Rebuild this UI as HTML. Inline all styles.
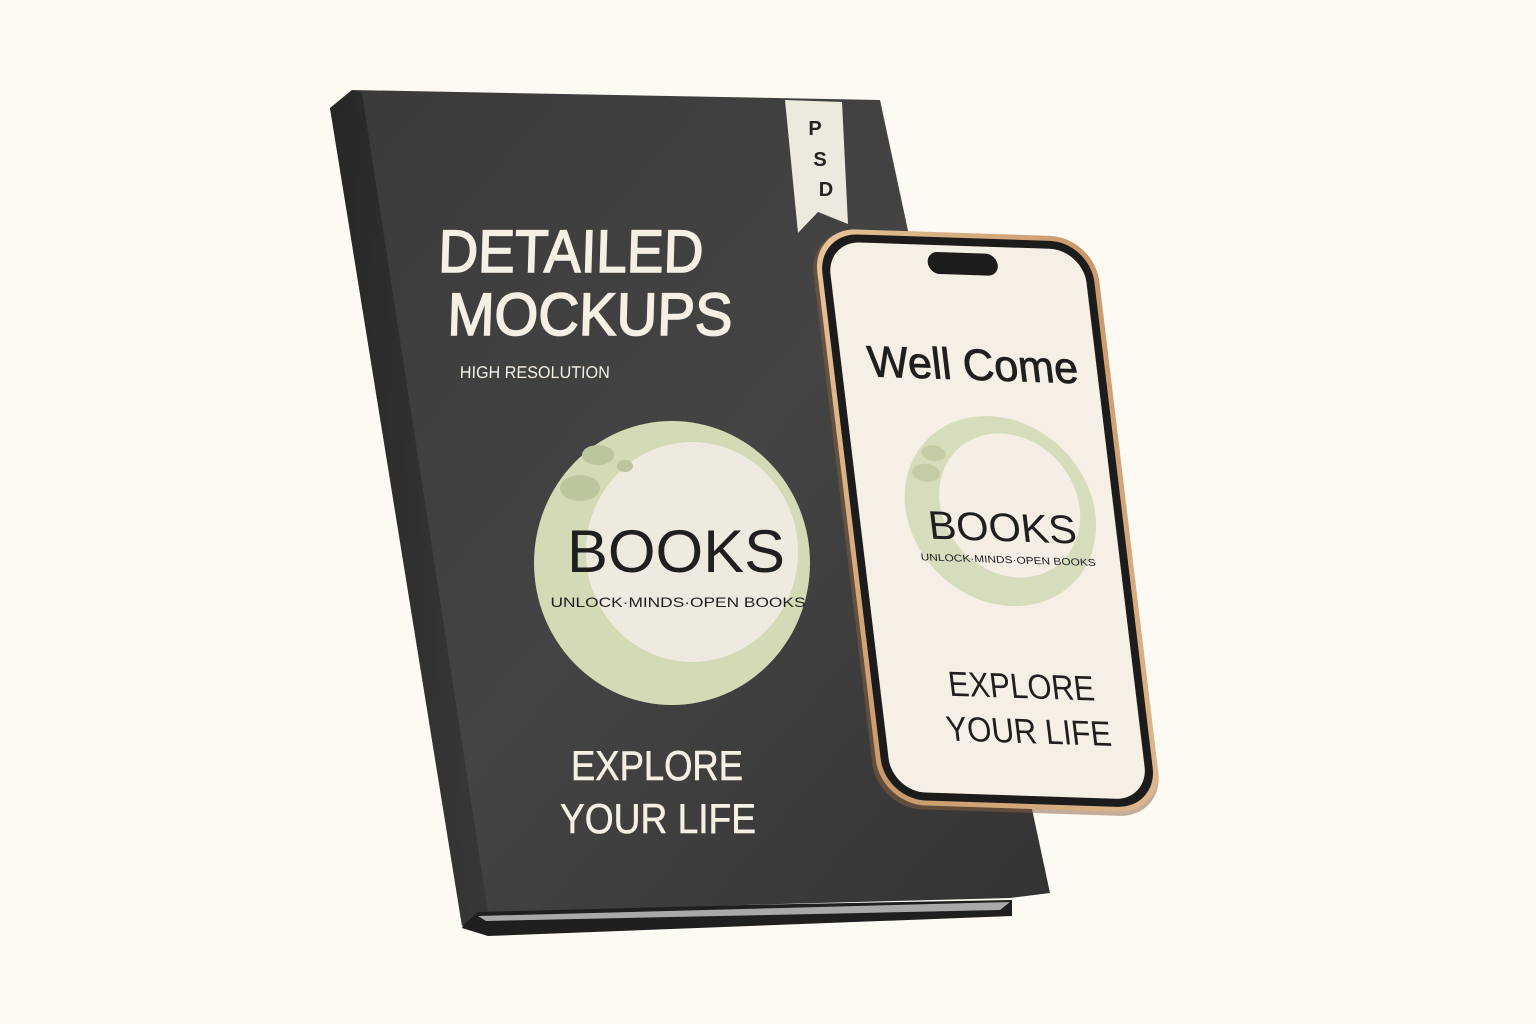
<!DOCTYPE html>
<html><head><meta charset="utf-8"><style>
html,body{margin:0;padding:0;background:#fdf9f3;}
svg{display:block}
</style></head><body>
<svg width="1536" height="1024" viewBox="0 0 1536 1024" xmlns="http://www.w3.org/2000/svg">
<defs>
<linearGradient id="cov" x1="0" y1="0" x2="1" y2="1">
<stop offset="0" stop-color="#3a3a3a"/><stop offset="0.5" stop-color="#444"/><stop offset="1" stop-color="#333"/>
</linearGradient>
<linearGradient id="spine" x1="0" y1="0" x2="1" y2="0">
<stop offset="0" stop-color="#1e1e1e"/><stop offset="1" stop-color="#333"/>
</linearGradient>
<linearGradient id="gold" x1="0" y1="0" x2="1" y2="1">
<stop offset="0" stop-color="#e7c59a"/><stop offset="0.5" stop-color="#c9986a"/><stop offset="1" stop-color="#deb88c"/>
</linearGradient>
</defs>
<polygon points="462,928 488,936 1012,916 1012,900 470,910" fill="#1f1f1f"/>
<polygon points="478,916 1010,902 1000,910 486,921" fill="#a9a9a9"/>
<polygon points="330,108 352,90 880,100 1050,893 1010,898 478,912 462,926" fill="url(#cov)"/>
<polygon points="330,108 352,90 362,93 488,912 478,912 462,926" fill="url(#spine)" opacity="0.7"/>
<polygon points="785,100 842,102 848,224 818,212 798,233" fill="#ede9df"/>
<g font-family="Liberation Sans, sans-serif" font-weight="bold" font-size="20" fill="#222" text-anchor="middle">
<text x="815" y="135">P</text><text x="820" y="166">S</text><text x="826" y="196">D</text>
</g>
<g transform="matrix(1,0,-0.03,1,0,0)" font-family="Liberation Sans, sans-serif" fill="#f6efe4">
<text x="446" y="272" font-size="60" stroke="#f6efe4" stroke-width="1.6" textLength="265" lengthAdjust="spacingAndGlyphs">DETAILED</text>
<text x="457" y="335" font-size="60" stroke="#f6efe4" stroke-width="1.6" textLength="285" lengthAdjust="spacingAndGlyphs">MOCKUPS</text>
<text x="471" y="378" font-size="17" textLength="150" lengthAdjust="spacingAndGlyphs">HIGH RESOLUTION</text>
</g>
<ellipse cx="672" cy="563" rx="138" ry="142" fill="#d2dab6"/>
<ellipse cx="692" cy="552" rx="106" ry="110" fill="#efeae0"/>
<ellipse cx="598" cy="455" rx="16" ry="10" fill="#bcc69d"/>
<ellipse cx="580" cy="488" rx="20" ry="13" fill="#bcc69d"/>
<ellipse cx="625" cy="466" rx="8" ry="6" fill="#bcc69d"/>
<g font-family="Liberation Sans, sans-serif" fill="#1f1f1f" text-anchor="middle">
<text x="676" y="572" font-size="60" textLength="218" lengthAdjust="spacingAndGlyphs">BOOKS</text>
<text x="678" y="607" font-size="14" textLength="255" lengthAdjust="spacingAndGlyphs">UNLOCK·MINDS·OPEN BOOKS</text>
</g>
<g font-family="Liberation Sans, sans-serif" fill="#f6efe4" text-anchor="middle" stroke="#f6efe4" stroke-width="0.6">
<text x="657" y="780" font-size="42" textLength="172" lengthAdjust="spacingAndGlyphs">EXPLORE</text>
<text x="658" y="833" font-size="42" textLength="196" lengthAdjust="spacingAndGlyphs">YOUR LIFE</text>
</g>
<g transform="matrix(1,0.033,0.12,1,812,228)">
<rect x="-4" y="2" width="286" height="578" rx="44" fill="#8a6040" opacity="0.5"/>
<rect x="0" y="0" width="282" height="576" rx="44" fill="url(#gold)"/>
<rect x="5" y="5" width="272" height="566" rx="40" fill="#1c1c1c"/>
<rect x="13" y="13" width="256" height="550" rx="33" fill="#f6efe5"/>
<rect x="112" y="20" width="70" height="22" rx="11" fill="#1c1c1c"/>
<g font-family="Liberation Sans, sans-serif" fill="#1f1f1f" text-anchor="middle">
<text x="145" y="147" font-size="44" stroke="#1f1f1f" stroke-width="0.8" textLength="210" lengthAdjust="spacingAndGlyphs">Well Come</text>
</g>
<ellipse cx="155" cy="278" rx="95" ry="95" fill="#d6ddbc"/>
<ellipse cx="165" cy="272" rx="70" ry="72" fill="#f4eee4"/>
<ellipse cx="95" cy="222" rx="12" ry="8" fill="#c3cca4"/>
<ellipse cx="85" cy="242" rx="14" ry="9" fill="#c3cca4"/>
<g font-family="Liberation Sans, sans-serif" fill="#1f1f1f" text-anchor="middle">
<text x="155" y="308" font-size="40" textLength="148" lengthAdjust="spacingAndGlyphs">BOOKS</text>
<text x="157" y="330" font-size="10" textLength="175" lengthAdjust="spacingAndGlyphs">UNLOCK·MINDS·OPEN BOOKS</text>
<text x="155" y="465" font-size="35" textLength="146" lengthAdjust="spacingAndGlyphs">EXPLORE</text>
<text x="157" y="510" font-size="35" textLength="165" lengthAdjust="spacingAndGlyphs">YOUR LIFE</text>
</g>
</g>
</svg>
</body></html>
